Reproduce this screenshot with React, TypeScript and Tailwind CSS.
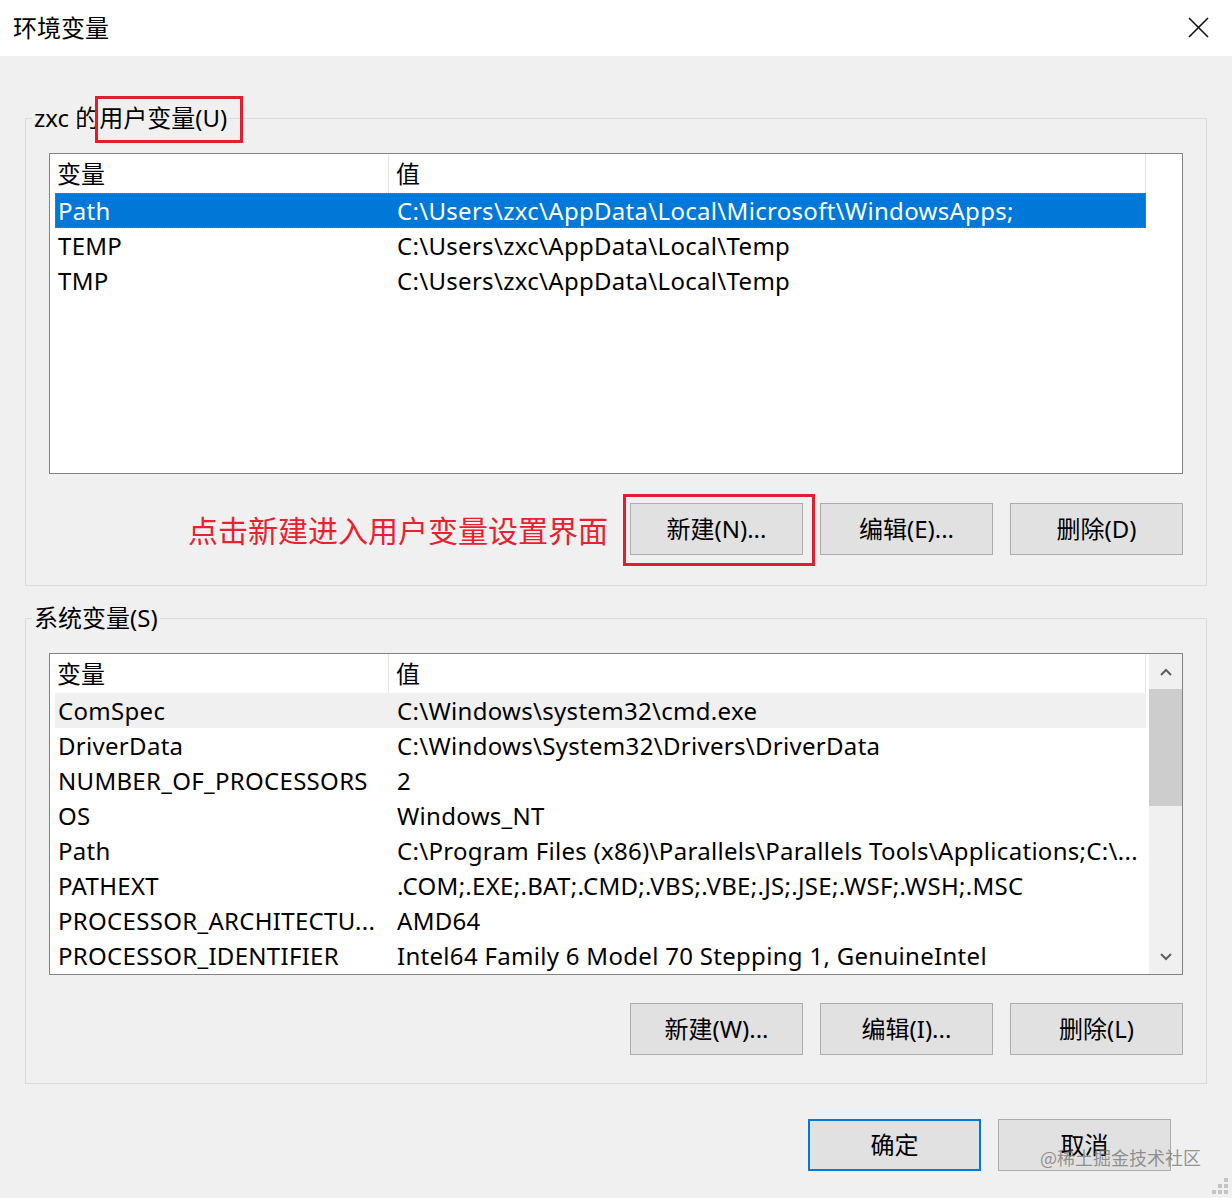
import { ReactNode } from 'react';

type EnvVar = { name: string; value: string };

const userVars: EnvVar[] = [
  { name: 'Path', value: 'C:\\Users\\zxc\\AppData\\Local\\Microsoft\\WindowsApps;' },
  { name: 'TEMP', value: 'C:\\Users\\zxc\\AppData\\Local\\Temp' },
  { name: 'TMP', value: 'C:\\Users\\zxc\\AppData\\Local\\Temp' },
];

const systemVars: EnvVar[] = [
  { name: 'ComSpec', value: 'C:\\Windows\\system32\\cmd.exe' },
  { name: 'DriverData', value: 'C:\\Windows\\System32\\Drivers\\DriverData' },
  { name: 'NUMBER_OF_PROCESSORS', value: '2' },
  { name: 'OS', value: 'Windows_NT' },
  { name: 'Path', value: 'C:\\Program Files (x86)\\Parallels\\Parallels Tools\\Applications;C:\\...' },
  { name: 'PATHEXT', value: '.COM;.EXE;.BAT;.CMD;.VBS;.VBE;.JS;.JSE;.WSF;.WSH;.MSC' },
  { name: 'PROCESSOR_ARCHITECTU...', value: 'AMD64' },
  { name: 'PROCESSOR_IDENTIFIER', value: 'Intel64 Family 6 Model 70 Stepping 1, GenuineIntel' },
];

const WinButton = ({ children, primary = false }: { children: ReactNode; primary?: boolean }) => (
  <button
    className={`w-[173px] h-[52px] bg-[#e1e1e1] text-[24px] text-black flex items-center justify-center ${
      primary ? 'border-2 border-[#0078d7]' : 'border border-[#adadad]'
    }`}
  >
    {children}
  </button>
);

// list view with header + rows, optional scrollbar on the right
const VarList = ({
  rows,
  selected,
  hovered,
  scroll = false,
  height,
}: {
  rows: EnvVar[];
  selected?: number;
  hovered?: number;
  scroll?: boolean;
  height: string;
}) => (
  <div className={`bg-white border border-[#828282] flex overflow-hidden ${height}`}>
    <div className="w-[1096px] flex flex-col">
      <div className="flex h-[39px] shrink-0">
        <div className="w-[339px] pl-[7px] border-r border-[#e5e5e5] flex items-center">变量</div>
        <div className="flex-1 pl-[7px] border-r border-[#e5e5e5] flex items-center">值</div>
      </div>
      {rows.map((r, i) => (
        <div
          key={r.name + i}
          className={`ml-[5px] flex h-[35px] shrink-0 items-center whitespace-nowrap tracking-[0.3px] ${
            i === selected
              ? 'bg-[#0078d7] text-white outline-1 outline-dotted -outline-offset-1 outline-[#7a7a7a]'
              : i === hovered
              ? 'bg-[#f0f0f0]'
              : ''
          }`}
        >
          <div className="w-[334px] pl-[3px] overflow-hidden">{r.name}</div>
          <div className="flex-1 pl-[8px] overflow-hidden">{r.value}</div>
        </div>
      ))}
    </div>
    <div className="flex-1" />
    {scroll && (
      <div className="w-[33px] bg-[#f0f0f0] flex flex-col shrink-0">
        <div className="h-[35px] flex items-center justify-center">
          <svg width="12" height="8" viewBox="0 0 12 8">
            <path d="M1 7 L6 2 L11 7" fill="none" stroke="#606060" strokeWidth="2" />
          </svg>
        </div>
        <div className="h-[117px] bg-[#cdcdcd]" />
        <div className="flex-1" />
        <div className="h-[35px] flex items-center justify-center">
          <svg width="12" height="8" viewBox="0 0 12 8">
            <path d="M1 1 L6 6 L11 1" fill="none" stroke="#606060" strokeWidth="2" />
          </svg>
        </div>
      </div>
    )}
  </div>
);

export default function App() {
  return (
    <div className="w-[1232px] h-[1198px] bg-[#f0f0f0] text-black text-[24px] leading-[32px] font-['Segoe_UI','Noto_Sans','Noto_Sans_CJK_SC',sans-serif] relative overflow-hidden">
      {/* title bar */}
      <div className="h-[56px] bg-white flex items-center justify-between pl-[13px] pr-[23px]">
        <span>环境变量</span>
        <svg width="21" height="21" viewBox="0 0 21 21" className="mb-[2px]">
          <path d="M1 1 L20 20 M20 1 L1 20" stroke="#111" strokeWidth="1.6" />
        </svg>
      </div>

      {/* user variables */}
      <fieldset className="ml-[25px] mt-[46px] w-[1182px] border border-[#dcdcdc] px-[23px] pb-[30px]">
        <legend className="-ml-[17px] px-[2px]">
          zxc 的
          <span className="relative inline-block">
            用户变量(U)
            <span className="absolute -left-[4px] -top-[6px] -right-[16px] -bottom-[9px] border-[3px] border-[#e31e2c]" />
          </span>
        </legend>
        <div className="mt-[19px]">
          <VarList rows={userVars} selected={0} height="h-[321px]" />
        </div>
        <div className="mt-[29px] flex justify-end items-center gap-[17px]">
          <span className="text-[30px] text-[#e8212e] mr-[5px] font-['Noto_Sans_CJK_SC',sans-serif]">
            点击新建进入用户变量设置界面
          </span>
          <div className="relative">
            <WinButton>新建(N)...</WinButton>
            <span className="absolute -left-[7px] -top-[9px] -right-[12px] -bottom-[11px] border-[3px] border-[#e31e2c]" />
          </div>
          <WinButton>编辑(E)...</WinButton>
          <WinButton>删除(D)</WinButton>
        </div>
      </fieldset>

      {/* system variables */}
      <fieldset className="ml-[25px] mt-[16px] w-[1182px] border border-[#dcdcdc] px-[23px] pb-[28px]">
        <legend className="-ml-[17px] px-[2px]">系统变量(S)</legend>
        <div className="mt-[19px]">
          <VarList rows={systemVars} hovered={0} scroll height="h-[322px]" />
        </div>
        <div className="mt-[28px] flex justify-end gap-[17px]">
          <WinButton>新建(W)...</WinButton>
          <WinButton>编辑(I)...</WinButton>
          <WinButton>删除(L)</WinButton>
        </div>
      </fieldset>

      {/* dialog buttons */}
      <div className="mt-[35px] flex justify-end gap-[17px] pr-[61px]">
        <WinButton primary>确定</WinButton>
        <WinButton>取消</WinButton>
      </div>

      {/* watermark */}
      <span className="absolute left-[1040px] top-[1145px] text-[18px] leading-[24px] text-[#6b6b6b]/70 font-['Noto_Sans_CJK_SC',sans-serif]">
        @稀土掘金技术社区
      </span>

      {/* resize grip */}
      <svg className="absolute right-[4px] bottom-[4px]" width="16" height="16" viewBox="0 0 16 16">
        <rect x="12" y="0" width="4" height="4" fill="#c4c4c4" />
        <rect x="6" y="6" width="4" height="4" fill="#c4c4c4" />
        <rect x="12" y="6" width="4" height="4" fill="#c4c4c4" />
        <rect x="0" y="12" width="4" height="4" fill="#c4c4c4" />
        <rect x="6" y="12" width="4" height="4" fill="#c4c4c4" />
        <rect x="12" y="12" width="4" height="4" fill="#c4c4c4" />
      </svg>
    </div>
  );
}
